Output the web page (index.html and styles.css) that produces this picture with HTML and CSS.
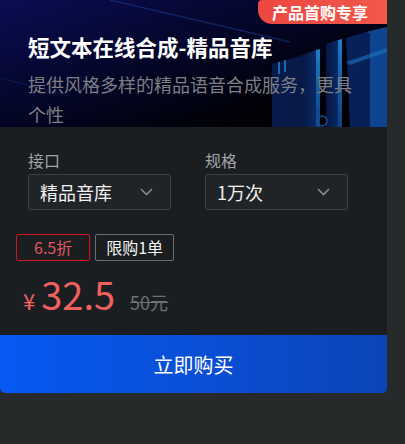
FILE: index.html
```html
<!DOCTYPE html>
<html lang="zh">
<head>
<meta charset="utf-8">
<title>短文本在线合成</title>
<link rel="stylesheet" href="styles.css">
</head>
<body>
<div class="card">
  <div class="hero">
    <svg class="hero-art" width="387" height="127" viewBox="0 0 387 127" aria-hidden="true">
      <defs>
        <linearGradient id="slab" x1="0" y1="0" x2="1" y2="0">
          <stop offset="0" stop-color="#06163f"/>
          <stop offset="1" stop-color="#0a2a66"/>
        </linearGradient>
        <linearGradient id="edge" x1="0" y1="0" x2="0" y2="1">
          <stop offset="0" stop-color="#1f7cc4"/>
          <stop offset="1" stop-color="#0d3f86"/>
        </linearGradient>
      </defs>
      <path d="M110 0 L290 42" stroke="#1a3680" stroke-width="1.5" opacity="0.6"/>
      <path d="M0 78 L70 96" stroke="#142a6a" stroke-width="1.2" opacity="0.5"/>
      <path d="M272 64 L300 56 L300 127 L272 127 Z" fill="#071a4a"/>
      <rect x="278" y="62" width="2" height="12" fill="#1e66b0"/>
      <rect x="284" y="60" width="2" height="12" fill="#1e66b0"/>
      <path d="M300 56 L316 50 L316 127 L300 127 Z" fill="url(#slab)"/>
      <path d="M316 50 L320 49 L320 127 L316 127 Z" fill="url(#edge)"/>
      <path d="M326 44 L338 40 L338 127 L326 127 Z" fill="url(#slab)"/>
      <path d="M338 40 L342 39 L342 127 L338 127 Z" fill="url(#edge)"/>
      <path d="M346 38 L366 32 L370 34 L370 127 L350 127 Z" fill="#081f58"/>
      <path d="M366 32 L387 27 L387 127 L370 127 L370 34 Z" fill="#0f4590"/>
      <path d="M346 62 L387 48 L387 52 L350 65 Z" fill="#1d74c2" opacity="0.6"/>
      <circle cx="322" cy="121" r="5" fill="none" stroke="#1c4f98" stroke-width="1.5"/>
    </svg>
    <span class="badge">产品首购专享</span>
    <h1 class="title">短文本在线合成-精品音库</h1>
    <p class="desc">提供风格多样的精品语音合成服务，更具个性</p>
  </div>
  <div class="body">
    <div class="fields">
      <div class="field">
        <div class="label">接口</div>
        <div class="select">
          <span>精品音库</span>
          <svg class="chev" width="13" height="8" viewBox="0 0 13 8"><path d="M1 1 L6.5 6.5 L12 1" fill="none" stroke="#85888c" stroke-width="1.6"/></svg>
        </div>
      </div>
      <div class="field">
        <div class="label">规格</div>
        <div class="select">
          <span>1万次</span>
          <svg class="chev" width="13" height="8" viewBox="0 0 13 8"><path d="M1 1 L6.5 6.5 L12 1" fill="none" stroke="#85888c" stroke-width="1.6"/></svg>
        </div>
      </div>
    </div>
    <div class="tags">
      <span class="tag tag-red">6.5折</span>
      <span class="tag tag-gray">限购1单</span>
    </div>
    <div class="price">
      <span class="cur">¥</span>
      <span class="amount">32.5</span>
      <s class="orig">50元</s>
    </div>
  </div>
  <button class="buy">立即购买</button>
</div>
</body>
</html>
```
FILE: styles.css
```css
* { box-sizing: border-box; }
html, body {
  margin: 0;
  padding: 0;
  background: #262a2b;
}
body {
  font-family: "Noto Sans CJK SC", "Noto Sans", sans-serif;
  width: 405px;
  height: 444px;
}
.card {
  width: 387px;
  background: #1b1e21;
  border-radius: 0 0 5px 5px;
}
.hero {
  position: relative;
  height: 127px;
  overflow: hidden;
  padding: 32px 28px 0 28px;
  background: linear-gradient(160deg, #0a0d52 0%, #050730 35%, #010108 75%, #000 100%);
}
.hero-art {
  position: absolute;
  left: 0;
  top: 0;
}
.badge {
  position: absolute;
  right: 0;
  top: 0;
  height: 24px;
  padding: 0 19px 0 14px;
  background: linear-gradient(90deg, #ec4741, #f0584a);
  color: #fff;
  font-weight: 700;
  font-size: 16px;
  line-height: 24px;
  border-radius: 4px 0 0 14px;
}
.title {
  position: relative;
  margin: 0;
  color: #fff;
  font-size: 21.5px;
  line-height: 30px;
  font-weight: 700;
}
.desc {
  position: relative;
  margin: 7px 0 0 0;
  color: #7c7f84;
  font-size: 18px;
  line-height: 30px;
}
.body {
  padding: 22px 0 22px 0;
}
.fields {
  display: grid;
  grid-template-columns: 143px 143px;
  column-gap: 34px;
  padding: 0 28px;
}
.label {
  color: #a0a3a7;
  font-size: 16px;
  line-height: 22px;
  margin-bottom: 3px;
}
.select {
  height: 36px;
  border: 1px solid #3b3e43;
  border-radius: 2px;
  background: #212427;
  display: flex;
  align-items: center;
  justify-content: space-between;
  padding: 0 17px 0 11px;
  color: #f2f2f2;
  font-size: 18px;
}
.chev { display: block; }
.tags {
  display: flex;
  gap: 5px;
  padding: 0 16px;
  margin-top: 24px;
}
.tag {
  height: 27px;
  border-radius: 2px;
  font-size: 16px;
  line-height: 25px;
}
.tag-red {
  border: 1px solid #d01420;
  color: #e2575c;
  padding: 0 17px;
}
.tag-gray {
  border: 1px solid #6a6d71;
  color: #f4f4f4;
  padding: 0 10px;
}
.price {
  display: flex;
  align-items: baseline;
  padding: 0 0 0 23px;
  margin-top: 14px;
  line-height: 1;
  color: #f0605f;
}
.cur {
  font-size: 22px;
  margin-right: 6px;
}
.amount {
  font-size: 38px;
}
.orig {
  margin-left: 15px;
  font-size: 18px;
  color: #6e7075;
}
.buy {
  display: block;
  width: 387px;
  height: 58px;
  border: 0;
  border-radius: 0 0 5px 5px;
  background: linear-gradient(90deg, #0559f2 0%, #0a4fd6 50%, #0b45b7 100%);
  color: #fff;
  font-family: "Noto Sans CJK SC", "Noto Sans", sans-serif;
  font-size: 20px;
  padding: 0;
}
```
